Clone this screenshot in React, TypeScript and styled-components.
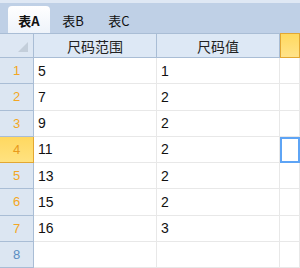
import styled, { createGlobalStyle } from 'styled-components';

const GlobalStyle = createGlobalStyle`
  html, body {
    margin: 0;
    padding: 0;
    background: #ffffff;
    overflow: hidden;
  }
  body {
    font-family: "Liberation Sans", "Noto Sans CJK SC", sans-serif;
  }
`;

const sheets = ['表A', '表B', '表C'];
const columns = ['尺码范围', '尺码值'];
const rows: [string, string][] = [
  ['5', '1'],
  ['7', '2'],
  ['9', '2'],
  ['11', '2'],
  ['13', '2'],
  ['15', '2'],
  ['16', '3'],
  ['', ''],
];
const activeRow = 3;

const Frame = styled.div`
  width: 300px;
  height: 268px;
  display: flex;
  flex-direction: column;
  overflow: hidden;
`;

const TabBar = styled.div`
  height: 34px;
  border-top: 3px solid #dfe8f4;
  background: #bfd0e6;
  display: flex;
  align-items: flex-end;
  padding-left: 8px;
`;

const Tab = styled.div<{ $active?: boolean }>`
  height: 27px;
  width: ${p => (p.$active ? '42px' : '46px')};
  display: flex;
  align-items: center;
  justify-content: center;
  font-family: "Noto Sans CJK SC", sans-serif;
  font-size: 13px;
  font-weight: ${p => (p.$active ? 700 : 400)};
  color: #111;
  border-radius: 4px 4px 0 0;
  background: ${p => (p.$active ? 'linear-gradient(#ffffff, #eef3fa)' : 'transparent')};
  box-sizing: border-box;
  padding-top: 2px;
`;

const Grid = styled.div`
  display: grid;
  grid-template-columns: 34px 123px 123px 1fr;
  grid-template-rows: 25px;
  grid-auto-rows: 26.25px;
`;

const Corner = styled.div`
  position: relative;
  background: #dde7f3;
  border-top: 1px solid #a9bdd5;
  border-right: 1px solid #a9bdd5;
  border-bottom: 1px solid #a9bdd5;
  box-sizing: border-box;
  &::after {
    content: '';
    position: absolute;
    right: 5px;
    bottom: 5px;
    width: 0;
    height: 0;
    border-left: 10px solid transparent;
    border-bottom: 10px solid #c3ceda;
  }
`;

const ColHeader = styled.div<{ $selected?: boolean }>`
  display: flex;
  align-items: center;
  justify-content: center;
  box-sizing: border-box;
  font-family: "Noto Sans CJK SC", sans-serif;
  font-size: 14px;
  color: #222;
  border-top: 1px solid ${p => (p.$selected ? '#e2a733' : '#a9bdd5')};
  border-right: 1px solid ${p => (p.$selected ? '#e2a733' : '#a9bdd5')};
  border-bottom: 1px solid ${p => (p.$selected ? '#e2a733' : '#a9bdd5')};
  border-left: ${p => (p.$selected ? '1px solid #e2a733' : '0')};
  background: ${p => (p.$selected ? 'linear-gradient(#ffd95f, #ffe38a)' : '#dde8f5')};
`;

const RowHeader = styled.div<{ $active?: boolean; $empty?: boolean }>`
  display: flex;
  align-items: center;
  justify-content: center;
  box-sizing: border-box;
  font-size: 13px;
  color: ${p => (p.$empty ? '#5a8dc2' : p.$active ? '#e89a1c' : '#f3a623')};
  background: ${p => (p.$active ? 'linear-gradient(#ffd860, #ffe280)' : '#dce6f2')};
  border-right: 1px solid ${p => (p.$active ? '#e2a733' : '#a9bdd5')};
  border-bottom: 1px solid ${p => (p.$active ? '#e2a733' : '#a9bdd5')};
`;

const Cell = styled.div<{ $current?: boolean }>`
  display: flex;
  align-items: center;
  box-sizing: border-box;
  padding-left: 4px;
  font-size: 14px;
  color: #111;
  border-right: 1px solid #e8e8e8;
  border-bottom: 1px solid #e8e8e8;
  outline: ${p => (p.$current ? '2px solid #5ea4f5' : 'none')};
  outline-offset: -2px;
`;

export default function App() {
  return (
    <Frame>
      <GlobalStyle />
      <TabBar>
        {sheets.map((s, i) => (
          <Tab key={s} $active={i === 0}>{s}</Tab>
        ))}
      </TabBar>
      <Grid>
        <Corner />
        {columns.map(c => (
          <ColHeader key={c}>{c}</ColHeader>
        ))}
        <ColHeader $selected />
        {rows.flatMap((r, i) => [
          <RowHeader key={`h${i}`} $active={i === activeRow} $empty={r[0] === ''}>{i + 1}</RowHeader>,
          <Cell key={`a${i}`}>{r[0]}</Cell>,
          <Cell key={`b${i}`}>{r[1]}</Cell>,
          <Cell key={`c${i}`} $current={i === activeRow} />,
        ])}
      </Grid>
    </Frame>
  );
}
